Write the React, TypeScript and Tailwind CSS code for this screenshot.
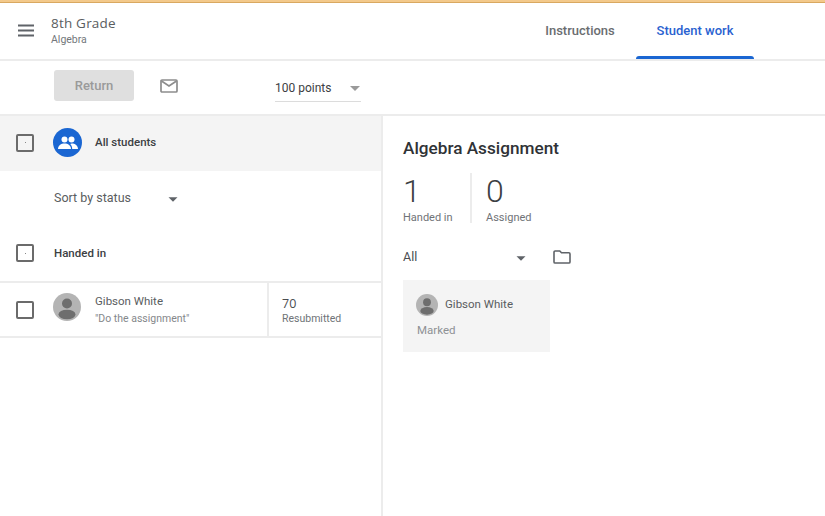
import { ReactNode } from 'react';

function Check({ dot }: { dot?: boolean }) {
  return (
    <div className="w-[18px] h-[18px] rounded-[2px] border-2 border-[#6b6b6b] flex items-center justify-center shrink-0">
      {dot && <div className="w-px h-px bg-[#888]" />}
    </div>
  );
}

function Caret({ className }: { className: string }) {
  return <div className={`w-0 h-0 border-x-[5px] border-x-transparent border-t-[5px] ${className}`} />;
}

function Avatar({ size }: { size: number }) {
  return (
    <svg width={size} height={size} viewBox="0 0 28 28" className="shrink-0">
      <circle cx="14" cy="14" r="14" fill="#b4b4b4" />
      <circle cx="14" cy="10.5" r="5" fill="#6e6e6e" />
      <ellipse cx="14" cy="21.5" rx="8.5" ry="4.8" fill="#6e6e6e" />
    </svg>
  );
}

function Stat({ value, label, children }: { value: string; label: string; children?: ReactNode }) {
  return (
    <div>
      <div className="text-[32px] leading-[36px] font-light text-[#3c4043]">{value}</div>
      <div className="text-[11px] leading-[14px] mt-[2px] text-[#6f7377]">{label}</div>
      {children}
    </div>
  );
}

export default function App() {
  return (
    <div className="w-[825px] h-[516px] overflow-hidden bg-white flex flex-col font-['Roboto',sans-serif]">
      <div className="h-[3px] bg-[#f3c98b] border-b border-[#d9a860] shrink-0" />
      {/* top bar */}
      <div className="h-[58px] shrink-0 flex items-center border-b-2 border-[#ececec]">
        <svg width="18" height="14" viewBox="0 0 18 14" className="ml-[18px]">
          <path d="M0 1.5h16M0 6.5h16M0 11.5h16" stroke="#5f6368" strokeWidth="2" fill="none" />
        </svg>
        <div className="ml-[15px] -mt-[1px]">
          <div className="text-[13.5px] leading-[18px] font-medium tracking-[0.2px] text-[#5a5d60] font-['Open_Sans',sans-serif]">8th Grade</div>
          <div className="text-[10.5px] leading-[14px] mt-px text-[#73777b]">Algebra</div>
        </div>
        <div className="ml-auto mr-[71px] flex h-full items-stretch">
          <div className="w-[118px] pl-[12px] flex items-center justify-center text-[13px] font-medium text-[#6a6d70]">Instructions</div>
          <div className="w-[118px] ml-[3px] relative flex items-center justify-center text-[13px] font-medium text-[#2a62d0]">
            Student work
            <div className="absolute left-0 right-0 bottom-0 h-[3px] rounded-t-[3px] bg-[#1a66d2]" />
          </div>
        </div>
      </div>
      {/* toolbar */}
      <div className="h-[55px] shrink-0 flex items-center border-b-2 border-[#ececec] pl-[54px]">
        <div className="w-[80px] h-[31px] -mt-[4px] rounded-[3px] bg-[#dfdfdf] flex items-center justify-center text-[13px] font-medium text-[#9a9a9a]">Return</div>
        <svg width="18" height="14" viewBox="0 0 18 14" className="ml-[26px] -mt-[4px]">
          <rect x="1" y="1" width="16" height="12" rx="1" fill="none" stroke="#8d8d8d" strokeWidth="1.7" />
          <path d="M1.5 2l7.5 5 7.5-5" fill="none" stroke="#8d8d8d" strokeWidth="1.7" />
        </svg>
        <div className="ml-[97px] mt-[2px] w-[86px] h-[27px] flex items-center justify-between border-b border-[#dcdcdc] text-[12px] text-[#3c4043]">
          100 points
          <Caret className="border-t-[#9a9a9a] mr-[1px]" />
        </div>
      </div>
      <div className="flex-1 flex min-h-0">
        {/* left column */}
        <div className="w-[383px] shrink-0 border-r-2 border-[#ececec]">
          <div className="h-[55px] bg-[#f4f4f4] flex items-center pl-[16px] pb-[2px]">
            <Check dot />
            <div className="ml-[19px] w-[29px] h-[29px] rounded-full bg-[#1a66d2] flex items-center justify-center">
              <svg width="20" height="14" viewBox="0 0 20 14">
                <circle cx="6.5" cy="3.5" r="3" fill="#fff" />
                <circle cx="13.5" cy="3.5" r="3" fill="#fff" />
                <path d="M0 13c0-3.5 3-5.5 6.5-5.5S13 9.500 13 13z" fill="#fff" />
                <path d="M14.200 13c0-2-0.700-3.800-2-5 0.500-0.300 1-0.500 1.500-0.500 3.300 0 6.300 2 6.300 5.500z" fill="#fff" />
              </svg>
            </div>
            <div className="ml-[13px] text-[11.5px] font-medium text-[#3c4043]">All students</div>
          </div>
          <div className="h-[54px] flex items-center pl-[54px]">
            <span className="text-[12.500px] text-[#5a5d60]">Sort by status</span>
            <Caret className="border-t-[#5f6368] ml-[37px] mt-[3px] scale-90" />
          </div>
          <div className="h-[58px] flex items-center pl-[16px] border-b-2 border-[#ececec]">
            <Check dot />
            <div className="ml-[20px] mt-[1px] text-[11.5px] font-medium text-[#3c4043]">Handed in</div>
          </div>
          <div className="h-[55px] flex items-stretch border-b-2 border-[#ececec]">
            <div className="flex items-center pl-[16px] w-[267px]">
              <Check />
              <div className="ml-[19px] -mt-[5px]"><Avatar size={28} /></div>
              <div className="ml-[14px] -mt-[1px]">
                <div className="text-[11.5px] leading-[16px] text-[#5a5d60]">Gibson White</div>
                <div className="text-[10.500px] leading-[14px] mt-[3px] text-[#85888b]">"Do the assignment"</div>
              </div>
            </div>
            <div className="flex-1 border-l-2 border-[#ececec] pl-[13px] pt-[13px]">
              <div className="text-[12.500px] leading-[16px] font-medium text-[#4a4d50] font-['Open_Sans',sans-serif]">70</div>
              <div className="text-[10.500px] leading-[14px] text-[#6f7377]">Resubmitted</div>
            </div>
          </div>
        </div>
        {/* right column */}
        <div className="flex-1 pl-[20px] pt-[21px]">
          <div className="text-[17.2px] leading-[22px] font-medium text-[#2f3236]">Algebra Assignment</div>
          <div className="flex mt-[14px]">
            <div className="w-[69px] border-r-2 border-[#ececec] h-[50px]">
              <Stat value="1" label="Handed in" />
            </div>
            <div className="ml-[14px]">
              <Stat value="0" label="Assigned" />
            </div>
          </div>
          <div className="flex items-center mt-[21px] h-[22px]">
            <span className="w-[113px] text-[12.500px] text-[#4a4d50]">All</span>
            <Caret className="border-t-[#5f6368] mt-[2px] scale-90" />
            <svg width="18" height="14" viewBox="0 0 18 14" className="ml-[27px]">
              <path d="M1 2.200c0-.6.500-1.200 1.100-1.200h4.700l1.700 1.800h7.400c.6 0 1.100.5 1.100 1.100v8c0 .6-.5 1.100-1.100 1.100H2.100C1.500 13 1 12.500 1 11.900z" fill="none" stroke="#5f6368" strokeWidth="1.600" />
            </svg>
          </div>
          <div className="w-[147px] h-[72px] mt-[12px] bg-[#f4f4f4] pl-[13px] pt-[14px]">
            <div className="flex items-center">
              <Avatar size={22} />
              <span className="ml-[7px] text-[11.5px] text-[#5a5d60]">Gibson White</span>
            </div>
            <div className="mt-[6px] ml-[1px] text-[11.5px] text-[#8e9194]">Marked</div>
          </div>
        </div>
      </div>
    </div>
  );
}
